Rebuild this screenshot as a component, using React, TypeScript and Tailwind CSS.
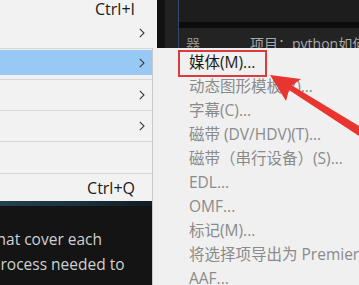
import React from "react";

const Chevron = () => (
  <svg width="6" height="10" viewBox="0 0 6 10" className="block">
    <polyline points="0.8,0.8 5,5 0.8,9.2" fill="none" stroke="#3a3a3a" strokeWidth="1.1" />
  </svg>
);

const Sep = () => <div className="h-px bg-[#d6d6d6]" />;

const subItems: { label: string; active?: boolean }[] = [
  { label: "媒体(M)...", active: true },
  { label: "动态图形模板(R)..." },
  { label: "字幕(C)..." },
  { label: "磁带 (DV/HDV)(T)..." },
  { label: "磁带（串行设备）(S)..." },
  { label: "EDL..." },
  { label: "OMF..." },
  { label: "标记(M)..." },
  { label: "将选择项导出为 Premiere Pro 项目..." },
  { label: "AAF..." },
];

export default function App() {
  return (
    <div
      className="relative w-[359px] h-[285px] overflow-hidden flex bg-[#1e1e1e]"
      style={{ fontFamily: "'Open Sans', 'Noto Sans CJK SC', sans-serif" }}
    >
      {/* Left column: main menu + app text below */}
      <div className="w-[157px] shrink-0 flex flex-col">
        <div className="h-[201px] bg-[#f2f2f2] flex flex-col text-[16px] text-[#1a1a1a]">
          <div className="h-[18px] leading-[18px] flex justify-end pr-[22px]">Ctrl+I</div>
          <div className="h-[30px] flex items-center justify-end pr-[12px]">
            <Chevron />
          </div>
          <Sep />
          <div className="h-[30px] pt-[1px] pb-[4px] flex flex-col">
            <div className="flex-1 bg-[#97c9f4] flex items-center justify-end pr-[12px]">
              <Chevron />
            </div>
          </div>
          <Sep />
          <div className="h-[30px] flex items-center justify-end pr-[12px]">
            <Chevron />
          </div>
          <Sep />
          <div className="h-[30px] flex items-center justify-end pr-[12px]">
            <Chevron />
          </div>
          <Sep />
          <div className="h-[31px]" />
          <Sep />
          <div className="h-[27px] flex items-center justify-end pr-[22px]">Ctrl+Q</div>
        </div>
        <div className="flex-1 bg-[#141414] flex flex-col">
          <div className="h-[5px] bg-gradient-to-r from-[#23414e] via-[#1a323d] to-[#0f1c23]" />
          <div className="pt-[21px] -ml-[9px] text-[15.5px] leading-[25px] text-[#d0d0d0] whitespace-nowrap">
            <div>that cover each</div>
            <div>process needed to</div>
          </div>
        </div>
      </div>

      {/* Right column: dark app panel */}
      <div className="flex-1 flex">
        <div className="w-[8px] bg-[#121212]" />
        <div className="w-[13px] bg-[#222222]" />
        <div className="w-px bg-[#2f4d6b]" />
        <div className="flex-1 flex flex-col">
          <div className="h-[22px] bg-[#1d1d1d] flex justify-end pr-[24px] overflow-hidden">
            <svg width="12" height="12" viewBox="0 0 12 12" className="-mt-[6px]">
              <polygon points="6,0 12,6 6,12 0,6" fill="#4a4a4a" />
            </svg>
          </div>
          <div className="h-[6px] bg-[#0d0d0d]" />
          <div className="flex-1 bg-[#232323] pt-[8px] pl-[7px] flex text-[14px] leading-[16px] whitespace-nowrap">
            <span className="text-[#8f8f8f]">器</span>
            <span className="ml-[50px] text-[#a8a8a8]">项目：python如何导出视频</span>
          </div>
        </div>
      </div>

      {/* Submenu */}
      <div className="absolute left-[152px] top-[48px] right-0 bottom-0 bg-[#f0f0f0] border-l border-[#c9c9c9] pt-[3px] text-[15.5px] whitespace-nowrap">
        {subItems.map((it) => (
          <div
            key={it.label}
            className={`h-[24px] flex items-center pl-[36px] ${it.active ? "text-[#1a1a1a]" : "text-[#8a8a8a]"}`}
          >
            {it.label}
          </div>
        ))}
      </div>

      {/* Red annotation box */}
      <div className="absolute left-[178px] top-[50px] w-[89px] h-[27px] border-2 border-[#dc3a3c]" />

      {/* Red arrow */}
      <svg className="absolute inset-0 pointer-events-none" width="359" height="285" viewBox="0 0 359 285">
        <polygon
          points="270,75 301,79 292,85.5 374,135.2 369.2,142.8 289,90 286,101"
          fill="#e8352f"
        />
      </svg>
    </div>
  );
}
